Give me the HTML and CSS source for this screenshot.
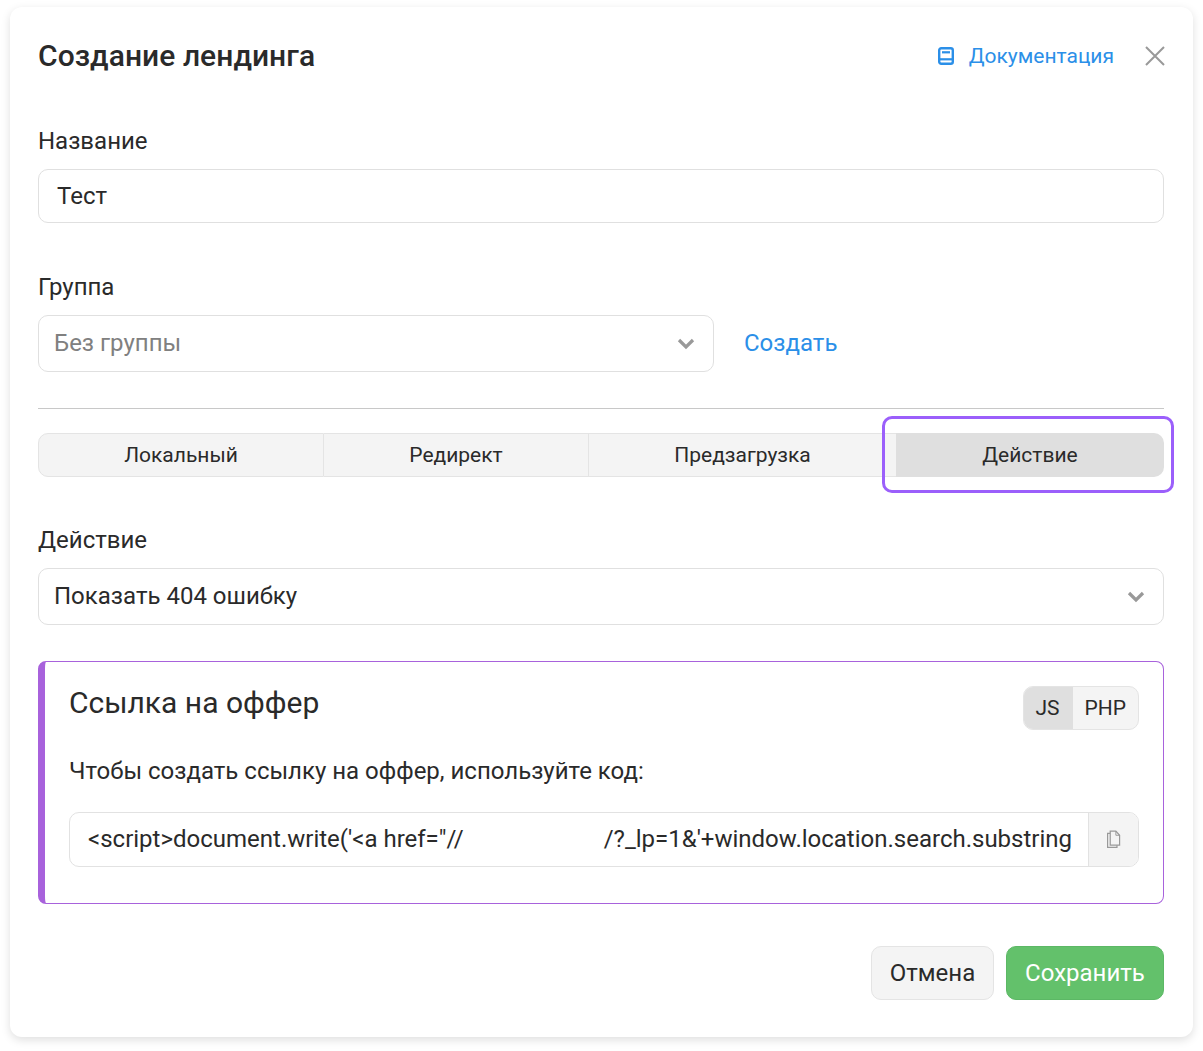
FILE: index.html
```html
<!DOCTYPE html>
<html lang="ru">
<head>
<meta charset="utf-8">
<title>Создание лендинга</title>
<link rel="stylesheet" href="styles.css">
</head>
<body>
<div class="modal">
  <header class="modal-head">
    <h1 class="modal-title">Создание лендинга</h1>
    <a class="doc-link">
      <svg class="doc-icon" viewBox="0 0 16 18" width="16" height="18"><rect x="1.200" y="1.200" width="13.600" height="15.600" rx="2" fill="none" stroke="#2b8fe8" stroke-width="2.400"/><rect x="4" y="4.200" width="8" height="2.200" fill="#2b8fe8"/><rect x="1" y="11.200" width="14" height="2.200" fill="#2b8fe8"/></svg>
      <span>Документация</span>
    </a>
    <svg class="close-icon" viewBox="0 0 20 20" width="20" height="20"><path d="M1 1l18 18M19 1L1 19" stroke="#999" stroke-width="2" fill="none"/></svg>
  </header>

  <section class="field-name">
    <label class="label">Название</label>
    <div class="input input-text">Тест</div>
  </section>

  <section>
    <label class="label">Группа</label>
    <div class="group-row">
      <div class="input select select-group muted">Без группы
        <svg class="chevron" viewBox="0 0 18 12" width="18" height="12"><path d="M2 2l7 7 7-7" stroke="#999" stroke-width="3.200" fill="none"/></svg>
      </div>
      <a class="create-link">Создать</a>
    </div>
  </section>

  <hr class="divider">

  <nav class="tabs">
    <div class="tab tab-a">Локальный</div>
    <div class="tab tab-b">Редирект</div>
    <div class="tab tab-c">Предзагрузка</div>
    <div class="tab tab-d">Действие</div>
    <div class="highlight"></div>
  </nav>

  <section class="field-action">
    <label class="label">Действие</label>
    <div class="input select">Показать 404 ошибку
      <svg class="chevron" viewBox="0 0 18 12" width="18" height="12"><path d="M2 2l7 7 7-7" stroke="#999" stroke-width="3.200" fill="none"/></svg>
    </div>
  </section>

  <section class="panel">
    <div class="panel-head">
      <h2 class="panel-title">Ссылка на оффер</h2>
      <div class="switch">
        <div class="switch-item on">JS</div>
        <div class="switch-item">PHP</div>
      </div>
    </div>
    <p class="panel-text">Чтобы создать ссылку на оффер, используйте код:</p>
    <div class="code-row">
      <div class="code">&lt;script&gt;document.write('&lt;a href="//<span class="code-gap"></span>/?_lp=1&amp;'+window.location.search.substring</div>
      <div class="copy">
        <svg viewBox="0 0 16 20" width="15" height="19"><path d="M4.500 1h6l4 4.500V16h-10z" fill="#f4f4f4" stroke="#999" stroke-width="1.300"/><path d="M10.500 1v4.500h4" fill="none" stroke="#999" stroke-width="1"/><path d="M4.500 3.500H1.700V18.500h10V16" fill="none" stroke="#999" stroke-width="1.300"/></svg>
      </div>
    </div>
  </section>

  <footer class="actions">
    <button class="btn btn-cancel">Отмена</button>
    <button class="btn btn-save">Сохранить</button>
  </footer>
</div>
</body>
</html>
```
FILE: styles.css
```css
* { box-sizing: border-box; }
html, body { margin: 0; height: 1051px; overflow: hidden; background: #fff; }
body {
  padding: 7px 10px 0;
  font-family: Roboto, "Liberation Sans", sans-serif;
  color: #2a2a2a;
}
.modal {
  width: 1183px;
  height: 1030px;
  padding: 0 29px 0 28px;
  background: #fff;
  border-radius: 12px;
  box-shadow: 0 3px 10px rgba(0, 0, 0, .13);
}
.modal-head {
  display: flex;
  align-items: center;
  height: 98px;
}
.modal-title {
  margin: 0;
  flex: 1;
  font-size: 30px;
  font-weight: 500;
  line-height: 34px;
  letter-spacing: .05px;
}
.doc-link {
  display: flex;
  align-items: center;
  gap: 15px;
  font-size: 21px;
  color: #2b8fe8;
}
.doc-icon { display: block; }
.close-icon { margin: 0 -1px 0 31px; flex: none; }

.label { display: block; font-size: 24px; line-height: 28px; }
.field-name { height: 168px; padding-top: 22px; }

.input {
  display: flex;
  align-items: center;
  height: 57px;
  margin-top: 14px;
  padding: 0 16px 2px 15px;
  background: #fff;
  border: 1px solid #e0e0e0;
  border-radius: 10px;
  font-size: 24px;
}
.input-text { height: 54px; padding: 0 18px; }
.select { justify-content: space-between; }
.muted { color: #808080; }
.chevron { margin: 2px 2px 0 0; }
.group-row { display: flex; align-items: center; gap: 30px; }
.select-group { width: 676px; }
.create-link { margin-top: 12px; font-size: 24px; color: #2b8fe8; }
.divider { margin: 36px 0 24px; border: 0; border-top: 1px solid #c8c8c8; }

.tabs {
  position: relative;
  display: grid;
  grid-template-columns: 286px 265px 307px 268px;
  height: 44px;
}
.tab {
  display: flex;
  align-items: center;
  justify-content: center;
  background: #f4f4f4;
  border: 1px solid #e4e4e4;
  border-left: 0;
  font-size: 21px;
}
.tab-a { border-left: 1px solid #e4e4e4; border-radius: 10px 0 0 10px; }
.tab-c { border-right: 0; }
.tab-d { border: 0; border-radius: 0 10px 10px 0; background: #dfdfdf; }
.highlight {
  position: absolute;
  left: 844px;
  top: -17px;
  width: 292px;
  height: 77px;
  border: 3px solid #9b5ffb;
  border-radius: 10px;
}
.field-action { margin-top: 49px; }

.panel {
  height: 243px;
  margin-top: 36px;
  padding: 24px 24px 0 24px;
  border: 1px solid #a862dc;
  border-left: 7px solid #a862dc;
  border-radius: 8px;
}
.panel-head { display: flex; justify-content: space-between; align-items: flex-start; height: 44px; }
.panel-title { margin: -1px 0 0; font-size: 30px; font-weight: 400; line-height: 36px; }
.switch {
  display: flex;
  height: 44px;
  border: 1px solid #e4e4e4;
  border-radius: 10px;
  overflow: hidden;
  font-size: 21px;
  background: #f4f4f4;
}
.switch-item { display: flex; align-items: center; padding: 0 12px; }
.switch-item.on { padding: 0 13px 0 11px; background: #dfdfdf; }
.panel-text { margin: 26px 0 0; font-size: 24px; line-height: 30px; }
.code-row {
  display: flex;
  height: 55px;
  margin-top: 26px;
  border: 1px solid #e2e2e2;
  border-radius: 10px;
  overflow: hidden;
}
.code {
  width: 1018px;
  padding: 0 0 0 18px;
  overflow: hidden;
  white-space: pre;
  font-size: 24px;
  line-height: 52px;
}
.code-gap { display: inline-block; width: 140px; }
.copy {
  flex: 1;
  display: flex;
  align-items: center;
  justify-content: center;
  background: #f4f4f4;
  border-left: 1px solid #e2e2e2;
}
.actions { display: flex; justify-content: flex-end; gap: 12px; margin-top: 42px; }
.btn {
  height: 54px;
  border-radius: 10px;
  font-family: inherit;
  font-size: 24px;
  padding: 0;
}
.btn-cancel { width: 123px; background: #f4f4f4; border: 1px solid #e4e4e4; color: #2a2a2a; }
.btn-save { width: 158px; background: #63c16b; border: 1px solid #5cb865; color: #fff; }
```
